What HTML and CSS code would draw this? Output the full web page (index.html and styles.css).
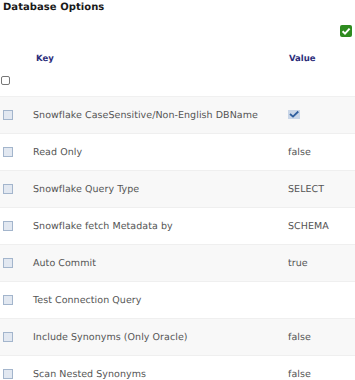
FILE: index.html
```html
<!DOCTYPE html>
<html>
<head>
<meta charset="utf-8">
<link rel="stylesheet" href="styles.css">
</head>
<body>
<div class="panel">
  <h1 class="title">Database Options</h1>
  <div class="toolbar">
    <span class="save-btn">
      <svg width="12" height="12" viewBox="0 0 12 12"><rect x="0" y="0" width="12" height="12" rx="2" fill="#2e8b1f"/><path d="M2.6 6.2 L5 8.6 L9.6 3.6" stroke="#fff" stroke-width="2" fill="none"/></svg>
    </span>
  </div>
  <div class="head">
    <span class="hcell-check"></span>
    <span class="hkey">Key</span>
    <span class="hval">Value</span>
  </div>
  <div class="select-all"><span class="box-white"></span></div>
  <div class="rows">
    <div class="row alt"><span class="cb"></span><span class="key">Snowflake CaseSensitive/Non-English DBName</span><span class="val"><span class="vcheck"><svg width="12" height="9" viewBox="0 0 12 9"><rect x="0" y="0" width="12" height="9" fill="#c9d6e8"/><path d="M2 4 L5 6.6 L10.3 1.5" stroke="#2f5e9e" stroke-width="1.8" fill="none"/></svg></span></span></div>
    <div class="row"><span class="cb"></span><span class="key">Read Only</span><span class="val">false</span></div>
    <div class="row alt"><span class="cb"></span><span class="key">Snowflake Query Type</span><span class="val">SELECT</span></div>
    <div class="row"><span class="cb"></span><span class="key">Snowflake fetch Metadata by</span><span class="val">SCHEMA</span></div>
    <div class="row alt"><span class="cb"></span><span class="key">Auto Commit</span><span class="val">true</span></div>
    <div class="row"><span class="cb"></span><span class="key">Test Connection Query</span><span class="val"></span></div>
    <div class="row alt"><span class="cb"></span><span class="key">Include Synonyms (Only Oracle)</span><span class="val">false</span></div>
    <div class="row"><span class="cb"></span><span class="key">Scan Nested Synonyms</span><span class="val">false</span></div>
  </div>
</div>
</body>
</html>
```

FILE: styles.css
```css
html, body {
  margin: 0;
  padding: 0;
  background: #fff;
}
body {
  font-family: "DejaVu Sans", "Open Sans", sans-serif;
  width: 355px;
  overflow: hidden;
  text-rendering: geometricPrecision;
}
.panel {
  display: flex;
  flex-direction: column;
}
.title {
  margin: 0;
  padding: 1px 0 0 3px;
  height: 15px;
  font-size: 10px;
  line-height: 13px;
  font-weight: 700;
  letter-spacing: 0.05px;
  color: #1a1a1a;
}
.toolbar {
  display: flex;
  justify-content: flex-end;
  padding: 9px 3px 0 0;
  height: 12px;
}
.save-btn {
  display: block;
  width: 12px;
  height: 12px;
}
.save-btn svg { display: block; }
.head {
  display: flex;
  align-items: center;
  height: 16px;
  margin-top: 14px;
  font-size: 8.5px;
  font-weight: 700;
  color: #2b2d7a;
}
.hcell-check { width: 36px; }
.hkey { flex: 1; }
.hval { width: 66px; }
.select-all {
  height: 20px;
  padding: 9px 0 0 1px;
  display: flex;
  align-items: flex-start;
  border-bottom: 1px solid #f0f0f0;
}
.box-white {
  width: 7px;
  height: 7px;
  border: 1px solid #777;
  border-radius: 2px;
  background: #fff;
}
.row {
  display: flex;
  align-items: center;
  height: 36px;
  border-bottom: 1px solid #efefef;
  font-size: 9.5px;
  letter-spacing: 0.05px;
  color: #555;
}
.row.alt { background: #f8f8f8; }
.cb {
  width: 8px;
  height: 8px;
  margin-left: 3px;
  border: 1px solid #a3b5cc;
  background: #e2e8f1;
  margin-right: 20px;
}
.key { flex: 1; min-width: 0; }
.val { width: 67px; }
.vcheck {
  display: inline-block;
  vertical-align: middle;
}
.vcheck svg { display: block; }
```
